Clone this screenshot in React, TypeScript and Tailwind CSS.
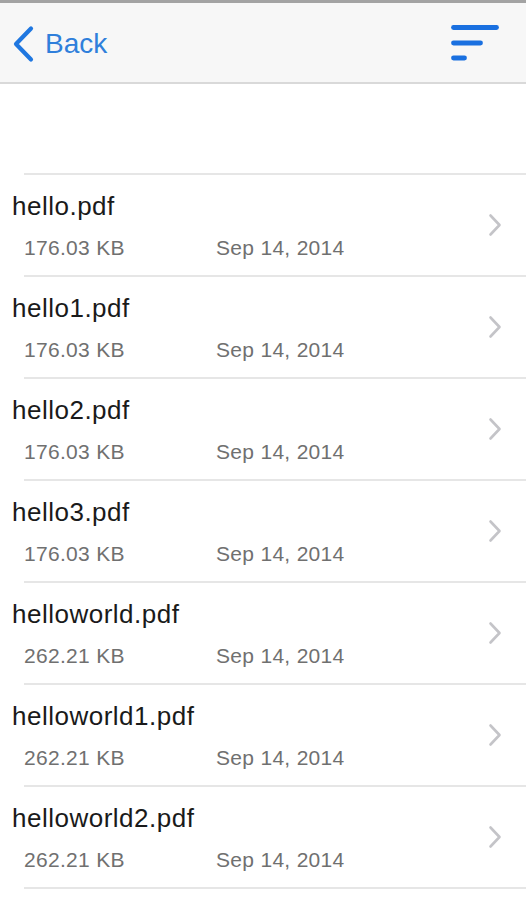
const files = [
  { name: "hello.pdf", size: "176.03 KB", date: "Sep 14, 2014" },
  { name: "hello1.pdf", size: "176.03 KB", date: "Sep 14, 2014" },
  { name: "hello2.pdf", size: "176.03 KB", date: "Sep 14, 2014" },
  { name: "hello3.pdf", size: "176.03 KB", date: "Sep 14, 2014" },
  { name: "helloworld.pdf", size: "262.21 KB", date: "Sep 14, 2014" },
  { name: "helloworld1.pdf", size: "262.21 KB", date: "Sep 14, 2014" },
  { name: "helloworld2.pdf", size: "262.21 KB", date: "Sep 14, 2014" },
];

export default function App() {
  return (
    <div className="h-[900px] w-[526px] overflow-hidden bg-white font-['Liberation_Sans',Arial,sans-serif]">
      <div className="h-[3px] bg-[#a3a3a3]" />
      <header className="flex h-[81px] items-center justify-between border-b-2 border-[#d9d9d9] bg-[#f7f7f7] pl-[10px] pr-[24px]">
        <button className="flex items-center text-[#2f7fdb]">
          <svg width="26" height="40" viewBox="0 0 26 40" fill="none" className="mt-[1px]">
            <polyline points="21,5.5 6,21 21,36.5" stroke="#1f77e0" strokeWidth="4.2" strokeLinecap="round" strokeLinejoin="round" />
          </svg>
          <span className="ml-[9px] mt-[3px] text-[28px] leading-[28px]">Back</span>
        </button>
        <svg width="54" height="42" viewBox="0 0 54 42" fill="none">
          <g stroke="#1a70e0" strokeWidth="4.8" strokeLinecap="round">
            <line x1="5.5" y1="5.5" x2="48.5" y2="5.5" />
            <line x1="5.5" y1="21" x2="32.5" y2="21" />
            <line x1="5.5" y1="36" x2="16.5" y2="36" />
          </g>
        </svg>
      </header>

      <div className="h-[89px]" />

      <div>
        <div className="ml-[24px] h-[2px] bg-[#e6e6e6]" />
        {files.map((f) => (
          <div key={f.name}>
            <div className="flex h-[100px] items-center pr-[24px]">
              <div className="flex-1 self-start pl-[12px] pt-[16px]">
                <p className="text-[26px] leading-[30px] tracking-[0.5px] text-[#1a1a1a]">{f.name}</p>
                <div className="mt-[14px] flex pl-[12px] text-[21px] leading-[26px] tracking-[0.3px] text-[#707070]">
                  <span className="w-[192px]">{f.size}</span>
                  <span>{f.date}</span>
                </div>
              </div>
              <svg width="14" height="24" viewBox="0 0 14 24" fill="none">
                <polyline points="2.5,2.5 11.5,12 2.5,21.5" stroke="#c4c4c8" strokeWidth="2.6" strokeLinecap="round" strokeLinejoin="round" />
              </svg>
            </div>
            <div className="ml-[24px] h-[2px] bg-[#e6e6e6]" />
          </div>
        ))}
      </div>
    </div>
  );
}
